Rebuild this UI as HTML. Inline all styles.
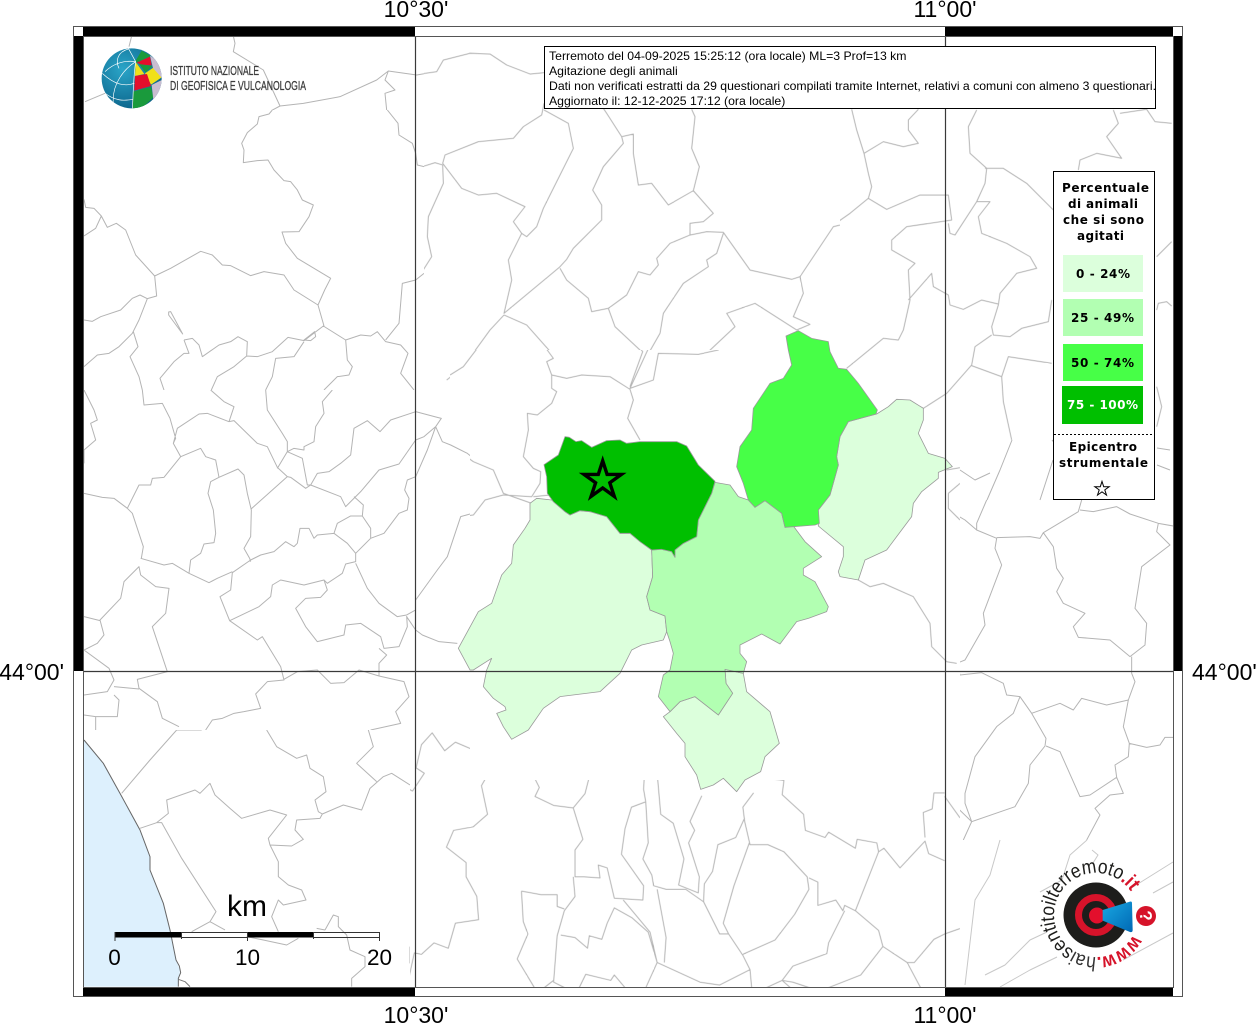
<!DOCTYPE html>
<html lang="it"><head><meta charset="utf-8"><title>Agitazione degli animali</title>
<style>
html,body{margin:0;padding:0;background:#fff;width:1256px;height:1024px;overflow:hidden}
svg{display:block;position:absolute;left:0;top:0}
text{font-family:"Liberation Sans",sans-serif}
.d text{font-family:"DejaVu Sans",sans-serif;font-weight:bold;font-size:12px}
.m{filter:blur(.3px)}
.m path{fill:none;stroke:#b4b4b4;stroke-width:1;stroke-linejoin:round;vector-effect:non-scaling-stroke}
.p path{stroke:#9a9a9a;stroke-width:.8;stroke-linejoin:round;vector-effect:non-scaling-stroke}
</style></head><body>
<svg width="1256" height="1024" viewBox="0 0 1256 1024" xmlns="http://www.w3.org/2000/svg">
<defs>
<clipPath id="t1"><rect x="84" y="36" width="340" height="74"/></clipPath>
<clipPath id="t8"><rect x="424" y="36" width="416" height="314"/><rect x="424" y="350" width="26" height="40"/></clipPath>
<clipPath id="t9"><rect x="840" y="36" width="333" height="404"/></clipPath>
<clipPath id="t6"><rect x="84" y="110" width="340" height="280"/></clipPath>
<clipPath id="t7"><rect x="84" y="390" width="386" height="340"/></clipPath>
<clipPath id="t4"><rect x="450" y="350" width="390" height="40"/><rect x="470" y="390" width="370" height="50"/><rect x="470" y="440" width="490" height="340"/></clipPath>
<clipPath id="t5"><rect x="84" y="730" width="326" height="257"/></clipPath>
<clipPath id="t11"><rect x="410" y="730" width="60" height="50"/><rect x="410" y="780" width="550" height="207"/></clipPath>
<clipPath id="t10"><rect x="960" y="500" width="213" height="340"/></clipPath>
<clipPath id="glb"><circle cx="110" cy="115" r="90"/></clipPath>
<radialGradient id="gb" cx=".35" cy=".35" r=".75"><stop offset="0" stop-color="#2aa5c8"/><stop offset="1" stop-color="#0a5f86"/></radialGradient>
<linearGradient id="cone" x1="0" y1="0" x2="1" y2="1"><stop offset="0" stop-color="#19a8e2"/><stop offset="1" stop-color="#0068b4"/></linearGradient>
<path id="ring" d="M1133.1,934.7 A42,42 0 1,1 1130.8,891.5"/>
</defs>
<rect width="1256" height="1024" fill="#fff"/>

<!-- sea -->
<path transform="translate(70,730) scale(.33333)" d="M42,30 L100,100 L150,190 L210,300 L240,380 L240,420 L280,520 L300,600 L322,700 L330,720 L325,770 L42,770Z" fill="#ddf0fd"/>
<path transform="translate(70,730) scale(.33333)" d="M42,30 L100,100 L150,190 L210,300 L240,380 L240,420 L280,520 L300,600 L318,690 L328,708 L332,728 L325,745 L325,770" fill="none" stroke="#666" stroke-width="3"/>

<g class="m">
<g clip-path="url(#t1)"><path transform="translate(60,0) scale(.33333)" d="M215,108 L207,140 M520,108 L525,130 L520,155 L610,210 L660,318 L600,350 L570,390 M660,318 L730,310 L840,290 L950,240 L985,213 L1070,225 L1130,215 L1165,178 L1200,170 M985,213 L975,240 L1005,270 L975,280 L980,330 L1015,390 M75,305 L135,280"/></g>

<g clip-path="url(#t6)"><path transform="translate(84,110) scale(.33333)" d="M565,0 L555,12 L525,20 L520,42 L490,68 L473,100 L480,120 L478,158 L520,152 L552,150 L570,180 L600,212 L620,215 L640,240 L655,270 L688,285 L675,320 L645,365 L594,366 L605,400 L640,445 L740,505 L722,540 L702,585 L720,648 M910,0 L942,40 L945,75 L985,100 L995,130 L1000,165 L1020,170 M0,268 L5,292 L30,295 L52,318 L70,352 L97,340 L125,360 L155,435 L212,498 L260,475 L350,424 L385,435 L415,465 L440,467 L500,497 L540,485 L600,495 L630,540 L702,585 M212,498 L218,558 L190,566 L168,555 L145,565 L110,600 L50,620 L25,634 L0,630 M52,318 L35,355 L0,378 M190,566 L165,630 L145,670 L105,710 L75,730 L40,735 L0,770 M148,665 L162,710 L138,740 L165,800 L175,840 M254,606 L260,605 L296,672 L254,615Z M300,690 L325,685 L345,705 L355,740 L405,705 L440,695 L462,680 L490,695 L488,738 L520,740 L565,725 L612,682 L660,692 L718,648 L785,690 L830,675 L860,678 L880,665 L905,695 L950,705 L972,730 L950,790 L990,840 M300,690 L315,730 L300,730 L270,755 L228,805 L240,840 M488,738 L450,770 L400,800 L382,840 M692,665 L660,690 L680,692 L695,680Z M660,695 L630,740 L575,745 L565,800 L545,840 M785,690 L790,750 L805,770 L795,795 L760,800 L720,840 M905,690 L945,640 L955,520 L995,510 L1020,490"/></g>

<g clip-path="url(#t7)"><path transform="translate(84,390) scale(.33333)" d="M175,0 L180,45 L235,40 L258,85 L275,145 L268,160 L290,200 L350,175 L365,200 L395,210 L405,262 L380,275 L372,310 L388,360 L395,430 L390,458 L360,462 L350,490 L320,510 L315,550 M290,200 L240,262 L205,265 L200,285 L165,285 L130,355 L90,325 L55,322 L0,310 M268,160 L280,115 L345,72 L370,70 L435,95 L450,92 L520,160 L550,170 L580,232 L610,260 L500,358 M405,262 L462,237 L480,255 L490,310 L502,360 L500,440 L480,475 L497,505 L500,515 M380,0 L420,35 L450,50 L435,95 M545,0 L550,60 L595,130 L610,155 L610,185 L580,235 M745,0 L715,35 L720,70 L695,110 L690,155 L660,170 L660,180 L630,175 L610,185 L655,205 L670,285 L680,285 L700,250 L735,245 L770,220 L800,195 L810,115 L850,92 L888,125 L920,90 L995,65 L1060,82 L1072,85 L1055,110 L1020,140 L995,150 L945,222 L885,240 L830,305 L785,350 L770,320 L680,285 L665,295 L620,262 L610,260 M810,320 L838,345 L835,378 L800,378 L760,400 L750,430 L700,435 L690,445 L675,415 L648,415 L640,460 L630,470 L605,455 L570,485 L530,495 L500,510 L445,548 L440,600 L408,620 L437,692 L525,650 L560,620 L565,585 L590,570 L660,585 L720,570 L730,580 L775,550 L785,522 L815,515 L815,490 L790,460 L750,430 M835,378 L860,415 L860,445 L815,490 M860,445 L900,430 L945,370 L970,360 L975,325 L962,300 L970,270 L995,260 L1030,180 L1055,110 M1055,110 L1075,155 L1100,165 L1150,190 L1200,230 M815,520 L850,595 L885,640 L940,680 L968,675 L995,660 M437,692 L520,750 L535,740 L590,830 L600,870 L550,875 L515,912 L530,955 L480,965 L450,970 L415,985 L385,990 L365,1020 M600,868 L640,845 L700,840 L740,880 L780,878 L825,840 L885,858 L960,875 L975,920 L935,965 L950,1000 L860,1020 M968,678 L970,710 L945,770 L900,775 L890,740 L830,700 L785,705 L780,735 L720,750 L700,755 L665,710 L635,655 L665,625 L710,622 L730,600 L720,570 M885,775 L908,795 L885,820 L885,858 M968,680 L995,720 L1015,735 L1065,755 L1120,760 M995,630 L1060,540 L1090,500 L1110,440 L1130,380 L1165,370 L1200,330 M0,780 L40,760 L60,735 L48,690 L110,625 L120,575 L165,530 L170,555 L215,590 L255,595 L245,670 L205,710 L250,845 L160,868 L165,895 L220,935 L235,985 L285,1010 M170,505 L240,525 L265,520 L315,550 L375,578 L400,565 L445,545 M172,505 L178,470 L145,370 L130,355 M0,680 L48,692 M0,780 L75,835 L90,870 L70,905 L0,915 M90,890 L165,897 M90,915 L105,930 L100,980 L35,980 L0,975 M35,980 L35,1020 M0,0 L30,60 L40,90 L20,100 L35,150 L0,180 L0,220"/></g>

<g clip-path="url(#t8)"><path transform="translate(420,40) scale(.33333)" d="M0,102 L50,95 L70,60 L150,40 L210,42 L260,75 L330,102 L372,98 M372,190 L365,225 L310,260 L280,295 L175,305 L75,345 L68,370 L125,445 L175,465 L230,460 L315,500 L280,545 L305,580 L320,590 L350,560 L370,505 L460,325 L445,250 L372,210 M0,382 L45,368 L68,375 L70,430 L25,530 L22,590 L35,650 L0,705 M305,580 L265,660 L275,720 L252,820 L418,682 L440,658 L460,625 L545,540 L545,495 L518,450 L550,380 L610,310 L605,290 L560,220 L550,205 M605,290 L640,282 L640,340 L655,435 L695,430 L745,495 L820,452 L838,380 L815,325 L825,230 L815,208 M820,452 L880,520 L850,545 L810,550 L810,585 L860,575 L910,577 L990,690 L1115,718 L1140,710 L1240,560 L1260,555 M810,585 L750,610 L710,655 L715,675 L690,705 L655,695 L620,765 L565,805 L515,815 L505,775 L440,720 L420,685 M565,805 L585,860 L660,930 L640,1020 M910,580 L890,640 L860,660 L865,680 L790,730 L730,820 L720,880 L640,1020 M252,825 L320,855 L400,945 L380,965 L395,1010 L580,1005 M252,825 L210,870 L130,980 L80,1020 M700,1020 L710,940 L860,940 L945,860 L920,820 L1005,790 L1130,870 L1170,853 L1120,830 L1150,760 L1140,710"/></g>

<g clip-path="url(#t9)"><path transform="translate(800,100) scale(.33333)" d="M155,28 L170,90 L192,160 L205,220 L215,260 L205,295 L150,340 L100,375 L75,430 L0,530 L0,590 M192,160 L250,125 L310,140 L355,130 L325,90 L325,60 L355,28 M205,295 L260,328 L360,285 L445,285 L455,360 L320,380 L275,420 L275,450 L345,490 L325,510 L330,600 L310,690 L295,720 L250,715 L140,805 M445,370 L450,400 L465,405 L530,305 L555,250 L560,205 L510,160 L505,80 L530,30 M555,205 L610,205 L680,250 L760,330 M530,305 L570,305 L535,350 L545,400 L620,430 L690,470 L710,505 L650,520 L600,580 L595,615 L575,680 L580,705 L630,710 L665,685 L745,665 L755,600 M595,612 L545,600 L490,628 L450,615 L445,585 L400,560 L395,520 L325,600 M575,705 L525,740 L515,795 L440,880 L370,925 L360,920 M515,797 L605,830 L610,905 L635,1020 M605,830 L625,770 L755,790 M0,670 L30,675 M835,210 L840,180 L890,160 L965,175 L920,110 L955,70 L940,30 M960,40 L1040,28 L1065,65 L1115,70 M1070,470 L1115,425 M1070,630 L1075,610 L1100,605 L1115,618 M1070,860 L1085,920 L1070,980"/></g>

<g clip-path="url(#t4)"><path transform="translate(450,320) scale(.33333)" d="M0,165 L40,140 L120,35 L150,0 M210,0 L255,40 L310,115 L290,125 L305,165 L305,205 L320,215 L305,250 L262,285 L232,280 L235,330 L220,410 L250,445 L272,455 L270,490 L245,530 L160,525 L105,540 L70,585 L30,590 L0,680 M305,165 L350,175 L395,165 L480,170 L540,208 L550,240 L533,295 L570,360 M490,0 L570,85 L578,95 L540,200 M630,0 L635,40 L600,75 L540,205 L610,180 L625,100 L745,103 L805,90 L810,72 L860,20 L825,0 M985,0 L1050,30 L1085,15 M1365,0 L1345,50 L1270,70 L1195,145 M1420,265 L1490,235 L1530,180 M0,375 L70,425 L130,450 L160,520 L245,550 M250,530 L300,525 M1225,780 L1260,800 L1300,790 L1390,830 L1440,910 L1445,980 L1490,1025 L1520,1030 M0,970 L25,985 M1490,450 L1530,443 M1495,520 L1495,565 L1530,600 M1495,520 L1530,490"/></g>

<g clip-path="url(#t5)"><path transform="translate(70,730) scale(.33333)" d="M320,0 L240,90 L155,190 M320,0 L395,0 M590,0 L620,50 L680,85 L710,75 L720,115 L760,140 L768,185 L735,210 L745,245 L757,252 L820,225 L875,240 L900,175 L940,140 L965,130 L1020,165 M757,252 L750,265 L680,270 L675,300 L700,328 L665,348 L600,345 L595,325 L650,255 L600,240 L515,265 L480,235 L435,195 L420,160 L390,190 L375,180 L290,210 L295,250 L260,278 L210,295 M260,278 L275,278 L335,385 L438,545 L420,575 L365,605 M420,575 L465,600 M600,345 L625,395 L625,440 L655,465 L695,480 L708,510 L640,525 L625,510 L605,560 L625,605 M895,0 L910,50 L860,100 L920,155 M530,620 L580,630 L650,645 L685,625 M765,600 L790,555 L805,560 L805,590 L830,615 L840,660 L885,680 L885,710 L845,745 L845,770 M740,595 L765,600 M1020,650 L1020,700"/>
<path transform="translate(70,730) scale(.33333)" d="M325,748 L345,755 L360,770" style="stroke:#777"/></g>

<g clip-path="url(#t11)"><path transform="translate(400,700) scale(.35714)" d="M315,118 L330,208 L375,215 L390,245 L378,270 L430,295 L485,302 L518,262 L530,215 L558,110 L548,0 M315,118 L325,180 L305,188 L225,148 L155,118 L125,142 L90,92 L60,125 L45,190 L68,205 L35,255 L0,235 M265,175 L228,240 L245,320 L205,355 L150,365 L130,412 L185,455 L185,495 L215,550 L220,615 L155,625 L135,695 L95,680 L60,712 L40,708 L20,800 L15,860 M485,302 L512,390 L490,420 L490,495 L515,495 L560,498 L555,462 L580,470 L600,555 L680,560 L682,520 L620,432 L630,360 L648,300 L688,285 L682,250 L685,195 L720,205 L765,208 L790,165 M720,205 L730,320 L765,345 L795,445 L780,518 L835,540 L838,495 L808,400 L825,365 L812,340 L845,268 M688,285 L695,400 L680,445 L705,490 L710,520 L745,530 L800,530 L850,565 L895,655 L920,655 L960,715 L980,755 L985,810 L970,840 M960,712 L1050,672 L1105,600 L1145,530 L1140,495 L1075,425 L1030,405 L980,405 L965,340 L960,300 L990,260 M978,400 L935,520 L905,625 L920,655 M965,330 L940,385 L890,405 L875,480 L852,515 L850,565 M1015,218 L1075,225 L1070,265 L1130,320 L1135,365 L1190,385 L1200,370 L1275,415 L1280,390 L1335,400 L1340,425 L1275,590 L1245,575 L1240,590 L1220,560 L1170,575 L1170,510 L1145,498 M1340,425 L1355,415 L1400,470 L1470,395 L1480,430 L1525,450 M1275,590 L1340,645 L1352,690 L1420,735 L1460,810 L1465,860 M1352,690 L1290,770 L1175,815 L1100,790 L1070,785 L1155,860 M1070,785 L1005,815 L970,840 M1245,590 L1200,680 L1195,710 L1100,745 L1070,785 M1420,735 L1440,735 L1495,670 L1525,655 L1568,640 M485,495 L490,550 L460,590 L440,660 L430,790 L470,810 L475,860 L520,768 L590,785 L600,770 L668,850 L720,735 L700,650 L625,560 M340,535 L395,545 L440,545 L440,578 L460,585 M340,535 L345,620 L358,655 L328,725 L385,820 L430,785 M450,658 L490,665 L525,695 L530,660 L565,670 L580,625 L600,582 L650,610 L695,650 L720,735 M720,735 L840,790 L895,798 L980,755 M720,530 L745,665 L740,735 M1525,40 L1515,60 L1510,100 L1520,130 M1525,260 L1495,260 L1490,305 L1465,315 L1470,385 M1525,270 L1568,330"/></g>

<g clip-path="url(#t10)"><path transform="translate(830,500) scale(.33333)" d="M85,240 L125,258 L160,255 L250,290 L275,350 L295,375 L300,430 L345,480 L380,490 L405,480 L465,375 L460,340 L515,195 L495,145 L500,115 L440,90 L440,70 L470,0 M345,25 L405,60 L440,90 M500,113 L600,110 L630,115 L640,98 L745,35 L755,0 M750,30 L790,35 L860,20 L900,42 L985,70 L1030,78 M640,98 L670,140 L680,205 L700,235 L680,275 L700,310 L765,340 L730,380 L745,412 L840,420 L900,470 L945,435 L950,370 L915,325 L935,200 L1020,135 L980,95 L985,70 M905,470 L905,520 L915,545 L895,600 L830,615 L755,595 L730,630 L690,610 L605,640 L570,590 L530,585 L520,550 L455,518 L390,525 L380,490 M390,525 L370,535 L365,590 L345,645 L328,650 L330,730 L360,770 L345,800 L335,870 M570,590 L550,640 L500,680 L435,770 L405,880 L405,910 L425,965 L400,1020 M605,640 L648,715 L645,738 L600,795 L595,850 L555,920 L425,965 L315,858 L305,905 L280,910 L295,990 L270,1020 M648,738 L690,755 L750,890 L780,885 L860,832 L855,795 L895,770 L898,730 L880,680 L895,600 M860,832 L880,880 L840,885 L795,925 L810,945 L770,1020 M898,730 L950,742 L990,735 L1005,712 L1030,712"/></g>

<!-- gaps: lines estimated -->
<path d="M1012,440 L1000,470 L987,500 M1082,500 L1078,470 L1052,440 M1157,448 L1170,450 M1157,465 L1170,470 M960,470 L975,480 L990,473 M1053,460 L1040,500"/>
<path d="M1087,840 L1070,855 L1062,880 L1040,892 M1000,840 L990,875 L975,900 L965,985 M1047,932 L1030,940 L1005,965 L985,975 M1057,957 L1030,970 L1000,987 M1123,960 L1173,933 M1133,887 L1173,862 M1153,893 L1173,882 M1092,850 L1098,855 L1093,863" style="stroke:#c8c8c8"/>
</g>

<!-- coloured municipalities -->
<g class="p" transform="translate(450,320) scale(.33333)">
<path fill="#dcffdc" d="M240,550 L260,535 L305,540 L345,575 L360,585 L390,572 L420,575 L470,590 L510,640 L540,640 L605,690 L608,770 L590,830 L600,870 L645,888 L650,935 L640,960 L575,975 L545,990 L520,1040 L510,1060 L450,1115 L330,1130 L280,1165 L235,1230 L185,1258 L160,1220 L140,1180 L168,1170 L165,1160 L130,1135 L100,1100 L110,1050 L125,1015 L70,1050 L60,1050 L25,985 L85,875 L125,850 L155,765 L185,730 L190,675 L225,625 L240,600Z"/>
<path fill="#dcffdc" d="M1195,305 L1280,282 L1315,260 L1340,238 L1380,240 L1420,265 L1420,300 L1405,340 L1435,400 L1485,415 L1507,440 L1465,457 L1465,475 L1415,515 L1390,550 L1385,590 L1340,650 L1310,690 L1245,720 L1225,780 L1170,770 L1165,755 L1180,710 L1180,680 L1105,618 L1105,570 L1140,525 L1165,435 L1160,410 L1170,350Z"/>
<path fill="#dcffdc" d="M825,1048 L880,1060 L890,1115 L960,1175 L988,1270 L945,1310 L932,1355 L885,1380 L860,1415 L820,1375 L790,1395 L752,1408 L740,1365 L705,1310 L705,1270 L680,1240 L640,1190 L660,1175 L690,1145 L735,1130 L805,1185 L848,1120 L828,1090Z"/>
<path fill="#b2ffb2" d="M795,487 L840,495 L865,530 L895,540 L915,562 L945,542 L995,580 L1005,622 L1030,618 L1065,665 L1115,710 L1060,745 L1060,765 L1095,785 L1135,860 L1130,875 L1075,895 L1040,905 L990,972 L935,942 L870,975 L870,1000 L890,1025 L880,1060 L825,1048 L828,1090 L848,1120 L805,1185 L735,1130 L690,1145 L660,1175 L625,1130 L640,1065 L660,1050 L670,1000 L660,965 L650,935 L645,888 L600,870 L590,830 L608,770 L605,690 L635,688 L665,695 L675,712 L675,690 L700,670 L740,650 L745,600 L785,520Z"/>
<path fill="#47ff47" d="M1008,48 L1045,32 L1085,55 L1135,65 L1140,95 L1165,145 L1190,148 L1225,190 L1282,270 L1278,282 L1195,305 L1170,350 L1160,410 L1165,435 L1140,525 L1105,570 L1108,610 L1095,615 L1005,622 L995,580 L945,542 L915,562 L895,540 L880,490 L860,440 L870,380 L905,330 L910,265 L960,190 L1000,175 L1025,135 L1015,90Z"/>
<path fill="#00bf00" d="M282,434 L325,405 L345,350 L358,352 L378,365 L395,362 L425,382 L470,362 L510,360 L530,370 L570,365 L680,365 L710,378 L745,435 L795,484 L785,520 L745,600 L740,650 L700,670 L675,690 L675,712 L665,695 L635,688 L605,690 L570,665 L540,640 L510,640 L490,615 L470,590 L420,575 L390,572 L360,585 L345,575 L310,545 L292,520 L290,470Z"/>
</g>

<!-- epicentre star -->
<polygon points="602.7,460.8 607.1,474.4 621.4,474.4 609.8,482.8 614.3,496.4 602.7,488 591.1,496.4 595.6,482.8 584,474.4 598.3,474.4" fill="#00bf00" stroke="#000" stroke-width="3.4" stroke-miterlimit="10"/>

<!-- graticule -->
<g stroke="#3a3a3a" stroke-width="1.2" fill="none">
<path d="M415.5,36V987M945.5,36V987M83,671.5H1173"/>
</g>

<!-- frame -->
<g>
<rect x="83" y="26" width="332" height="10" fill="#000"/>
<rect x="945" y="26" width="228" height="10" fill="#000"/>
<rect x="83" y="987" width="332" height="10" fill="#000"/>
<rect x="945" y="987" width="228" height="10" fill="#000"/>
<rect x="73" y="36" width="10" height="635" fill="#000"/>
<rect x="1173" y="36" width="10" height="635" fill="#000"/>
<rect x="73.5" y="26.5" width="1109" height="970" fill="none" stroke="#555"/>
<rect x="83.5" y="36.5" width="1090" height="951" fill="none" stroke="#555"/>
</g>

<!-- axis labels -->
<g font-size="23" fill="#000">
<text x="416" y="17" text-anchor="middle">10°30'</text>
<text x="945" y="17" text-anchor="middle">11°00'</text>
<text x="416" y="1023" text-anchor="middle">10°30'</text>
<text x="945" y="1023" text-anchor="middle">11°00'</text>
<text x="64" y="680" text-anchor="end">44°00'</text>
<text x="1192" y="680">44°00'</text>
</g>

<!-- title box -->
<rect x="544.5" y="46.5" width="611" height="62" fill="#fff" stroke="#000"/>
<g font-size="12.25" fill="#000">
<text x="549" y="60">Terremoto del 04-09-2025 15:25:12 (ora locale) ML=3 Prof=13 km</text>
<text x="549" y="75">Agitazione degli animali</text>
<text x="549" y="90" textLength="607" lengthAdjust="spacingAndGlyphs">Dati non verificati estratti da 29 questionari compilati tramite Internet, relativi a comuni con almeno 3 questionari.</text>
<text x="549" y="105">Aggiornato il: 12-12-2025 17:12 (ora locale)</text>
</g>

<!-- legend -->
<rect x="1053.5" y="171.5" width="101" height="328" fill="#fff" stroke="#000"/>
<rect x="1063" y="255" width="80" height="37" fill="#dcffdc"/>
<rect x="1063" y="299" width="80" height="37" fill="#b2ffb2"/>
<rect x="1063" y="344" width="80" height="37" fill="#47ff47"/>
<rect x="1062" y="386" width="81" height="38" fill="#00bf00"/>
<path d="M1054,434.5H1154" stroke="#000" stroke-dasharray="2 2"/>
<g class="d" fill="#000">
<text x="1062" y="192" textLength="87">Percentuale</text>
<text x="1068" y="208" textLength="70">di animali</text>
<text x="1063" y="224" textLength="81">che si sono</text>
<text x="1077" y="240" textLength="47">agitati</text>
<text x="1076" y="278" textLength="54">0 - 24%</text>
<text x="1071" y="322" textLength="63">25 - 49%</text>
<text x="1071" y="367" textLength="63">50 - 74%</text>
<text x="1067" y="409" textLength="71" fill="#fff">75 - 100%</text>
<text x="1069" y="451" textLength="68">Epicentro</text>
<text x="1059" y="467" textLength="89">strumentale</text>
</g>
<polygon points="1102,481.4 1103.7,486.7 1109.2,486.7 1104.8,489.9 1106.5,495.1 1102,491.9 1097.5,495.1 1099.2,489.9 1094.8,486.7 1100.3,486.7" fill="#fff" stroke="#000"/>

<!-- scale bar -->
<rect x="115" y="932" width="66" height="5.5" fill="#000"/>
<rect x="247" y="932" width="66" height="5.5" fill="#000"/>
<path d="M181,932.5H247M313,932.5H380M181,937.5H247M313,937.5H380" stroke="#333" fill="none"/>
<path d="M115,932V941M181.5,932V939M247.5,932V941M313.5,932V939M379.5,932V941" stroke="#333" fill="none"/>
<text x="247" y="916" text-anchor="middle" font-size="30">km</text>
<g font-size="22.5" text-anchor="middle">
<text x="114.5" y="965">0</text>
<text x="247.5" y="965">10</text>
<text x="379.5" y="965">20</text>
</g>

<!-- INGV logo -->
<g transform="translate(95,40) scale(.33333)">
<circle cx="110" cy="115" r="90" fill="url(#gb)"/>
<g clip-path="url(#glb)">
<path fill="#1a9a3c" d="M122,62 L140,32 L168,48 L125,68Z"/>
<path fill="#e30f2c" d="M125,68 L165,50 L170,76 L138,74Z"/>
<path fill="#f0e01a" d="M122,66 L148,102 L120,108Z"/>
<path fill="#1a9a3c" d="M132,72 L172,78 L152,98Z"/>
<path fill="#f0e01a" d="M150,100 L182,78 L200,112 L168,134Z"/>
<path fill="#e30f2c" d="M120,108 L156,102 L168,138 L118,152Z"/>
<path fill="#c9bdd0" d="M165,46 L192,66 L204,118 L174,84 L168,60Z"/>
<path fill="#1a9a3c" d="M115,155 L168,140 L175,172 L140,205 L112,208Z"/>
<path fill="#c9bdd0" d="M170,135 L204,118 L200,162 L175,180Z"/>
<path fill="#e30f2c" d="M175,182 L190,168 L182,192Z"/>
<g fill="none" stroke="#fff" stroke-width="2">
<path d="M122,65 C90,85 50,130 55,190"/>
<path d="M122,65 C115,110 115,160 112,210"/>
<path d="M122,65 C90,60 55,70 30,95"/>
<path d="M122,65 L100,25"/>
<path d="M22,100 C60,135 90,140 118,130"/>
<path d="M28,158 C60,185 90,182 114,178"/>
<path d="M100,27 C70,35 60,60 72,85"/>
</g>
</g>
</g>
<g font-size="13" fill="#3c3c3c" stroke="#3c3c3c" stroke-width=".3">
<text x="170" y="75" textLength="89" lengthAdjust="spacingAndGlyphs">ISTITUTO NAZIONALE</text>
<text x="170" y="90" textLength="136" lengthAdjust="spacingAndGlyphs">DI GEOFISICA E VULCANOLOGIA</text>
</g>

<!-- hai sentito logo -->
<circle cx="1096" cy="915" r="32.5" fill="#1d1d1b"/>
<circle cx="1096" cy="915" r="17.5" fill="none" stroke="#d6132a" stroke-width="7"/>
<circle cx="1097" cy="915.5" r="8" fill="#e30f2c"/>
<path transform="translate(1030,850) scale(.33333)" d="M218,180 L300,155 Q306,153 306,160 L308,240 Q308,248 300,246 L218,212Z" fill="url(#cone)"/>
<circle cx="1146" cy="916" r="10" fill="#d6132a"/>
<text x="1146" y="922" font-size="17" font-weight="bold" fill="#fff" text-anchor="middle" transform="rotate(80 1146 916)">?</text>
<text font-size="20"><textPath href="#ring" textLength="218" lengthAdjust="spacingAndGlyphs"><tspan fill="#d6132a" font-weight="bold">www.</tspan><tspan fill="#333">hai</tspan><tspan fill="#1d1d1b">sentito</tspan><tspan fill="#1d1d1b">il</tspan><tspan fill="#1d1d1b">terremoto</tspan><tspan fill="#d6132a" font-weight="bold">.it</tspan></textPath></text>
</svg>
</body></html>
